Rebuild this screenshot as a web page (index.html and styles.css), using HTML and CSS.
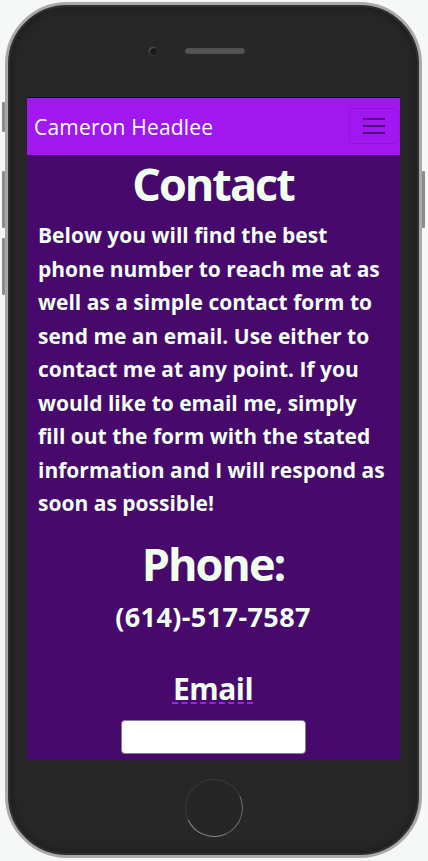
FILE: index.html
```html
<!DOCTYPE html>
<html lang="en">
<head>
<meta charset="utf-8">
<title>Contact</title>
<link rel="stylesheet" href="styles.css">
</head>
<body>
<div class="device">
  <span class="side-btn left b1"></span>
  <span class="side-btn left b2"></span>
  <span class="side-btn left b3"></span>
  <span class="side-btn right b4"></span>
  <div class="device-top">
    <span class="camera"></span>
    <span class="speaker"></span>
  </div>
  <div class="screen">
    <nav class="navbar">
      <span class="brand">Cameron Headlee</span>
      <button class="toggler" aria-label="Menu">
        <svg width="22" height="18" viewBox="0 0 22 18"><path d="M0 2h22M0 9h22M0 16h22" stroke="currentColor" stroke-width="2.2"/></svg>
      </button>
    </nav>
    <main class="content">
      <h1 class="title">Contact</h1>
      <p class="intro">Below you will find the best phone number to reach me at as well as a simple contact form to send me an email. Use either to contact me at any point. If you would like to email me, simply fill out the form with the stated information and I will respond as soon as possible!</p>
      <h2 class="phone-title">Phone:</h2>
      <p class="phone-number">(614)-517-7587</p>
      <form class="contact-form">
        <label class="email-label" for="email"><abbr title="required">Email</abbr></label>
        <input class="email-input" id="email" type="email">
      </form>
    </main>
  </div>
  <div class="device-bottom">
    <span class="home"></span>
  </div>
</div>
</body>
</html>
```
FILE: styles.css
```css
html, body {
  margin: 0;
  padding: 0;
}
body {
  background: #f6f8f7;
  width: 428px;
  height: 861px;
  overflow: hidden;
  font-family: "Open Sans", "Noto Sans", sans-serif;
}
.device {
  position: relative;
  box-sizing: border-box;
  width: 417px;
  height: 856px;
  margin: 2px 0 0 5px;
  border: 3px solid #a9a9a9;
  border-radius: 62px;
  background: #272727;
  box-shadow: inset 0 0 0 2px #303030, inset 0 0 12px rgba(0,0,0,0.5);
  display: flex;
  flex-direction: column;
  align-items: center;
}
.side-btn {
  position: absolute;
  width: 3px;
  background: #8c8c8c;
  border-radius: 1px;
}
.side-btn.left { left: -6px; }
.side-btn.right { right: -6px; }
.b1 { top: 97px; height: 30px; }
.b2 { top: 166px; height: 57px; }
.b3 { top: 233px; height: 57px; }
.b4 { top: 166px; height: 57px; }

.device-top {
  height: 92px;
  width: 100%;
  display: flex;
  align-items: center;
  padding-left: 141px;
  box-sizing: border-box;
  gap: 28px;
}
.camera {
  width: 8px;
  height: 8px;
  border-radius: 50%;
  background: #1b1b1b;
  box-shadow: 0 0 0 1px #333, inset 1px 1px 1px #555;
}
.speaker {
  width: 60px;
  height: 6px;
  border-radius: 3px;
  background: #555;
  box-shadow: inset 0 0 1px #222;
}
.screen {
  width: 373px;
  height: 663px;
  overflow: hidden;
  background: #48096c;
  border-top: 1px solid #0f0f0f;
  box-sizing: border-box;
  display: flex;
  flex-direction: column;
}
.navbar {
  height: 57px;
  flex: none;
  background: #a117f0;
  display: flex;
  align-items: center;
  justify-content: space-between;
  padding: 0 1px 0 7px;
}
.brand {
  color: #fff;
  font-family: "Open Sans", sans-serif;
  font-size: 21px;
  letter-spacing: 0.2px;
}
.toggler {
  width: 50px;
  height: 36px;
  margin-top: -2px;
  background: transparent;
  border: 1px solid rgba(0,0,0,0.1);
  border-radius: 5px;
  color: rgba(60,5,100,0.85);
  display: flex;
  align-items: center;
  justify-content: center;
  padding: 0;
}
.content {
  padding: 0 12px 0 11px;
  color: #f0fff0;
  text-align: center;
}
.title {
  margin: 4px 0 0;
  font-size: 45px;
  line-height: 50px;
  font-weight: 700;
  letter-spacing: -2px;
}
.intro {
  margin: 10px 0 0;
  text-align: left;
  font-size: 21px;
  line-height: 33.5px;
  font-weight: 700;
  letter-spacing: 0;
}
.phone-title {
  margin: 18px 0 0;
  font-size: 45px;
  line-height: 50px;
  font-weight: 700;
  letter-spacing: -2px;
}
.phone-number {
  margin: 12px 0 0;
  font-size: 27px;
  line-height: 32px;
  font-weight: 700;
  letter-spacing: 0.4px;
}
.contact-form {
  margin-top: 38px;
  display: flex;
  flex-direction: column;
  align-items: center;
}
.email-label {
  font-size: 30px;
  line-height: 36px;
  font-weight: 700;
  letter-spacing: -0.5px;
}
.email-label abbr {
  text-decoration: underline dashed #a020f0;
  text-decoration-thickness: 2px;
  text-underline-offset: 3px;
}
.email-input {
  margin-top: 13px;
  width: 185px;
  height: 34px;
  box-sizing: border-box;
  border: 1px solid #8b7d99;
  border-radius: 4px;
  background: #fff;
}
.device-bottom {
  flex: 1;
  width: 100%;
  display: flex;
  align-items: center;
  justify-content: center;
}
.home {
  width: 56px;
  height: 56px;
  border-radius: 50%;
  border: 1.5px solid;
  border-color: #3a3a3a #707070 #8a8a8a #3a3a3a;
  transform: rotate(20deg);
  background: #262626;
}
```
